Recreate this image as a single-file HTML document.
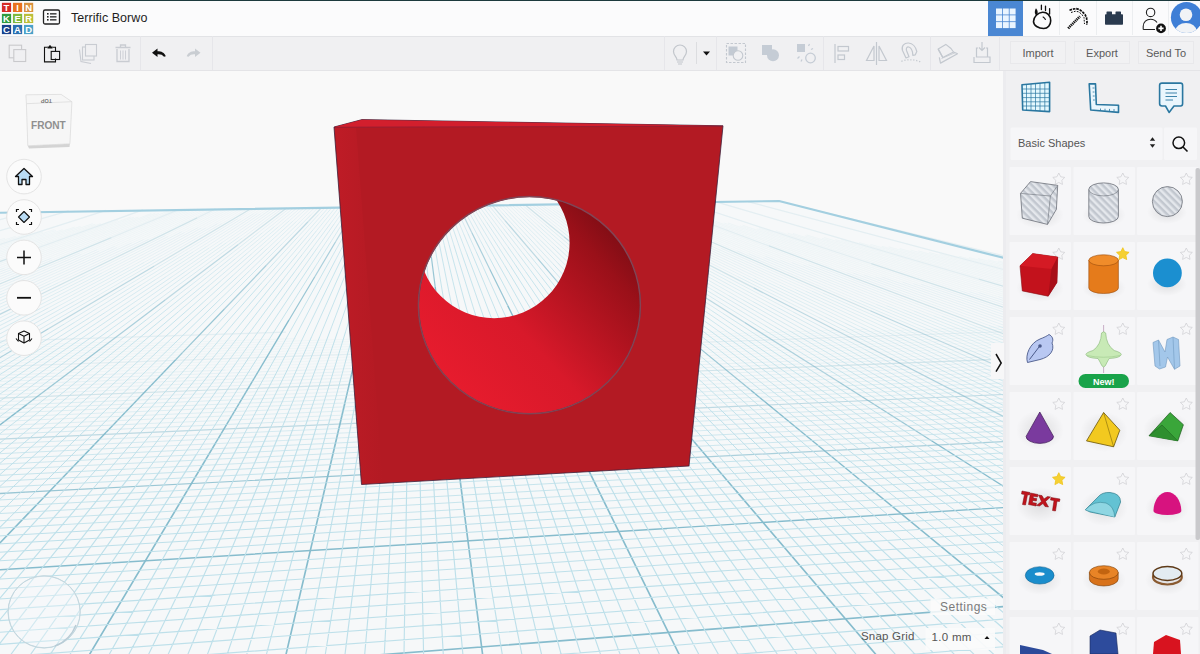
<!DOCTYPE html>
<html><head><meta charset="utf-8">
<style>
*{box-sizing:border-box;margin:0;padding:0}
html,body{width:1200px;height:654px;overflow:hidden;background:#f9f9f9;font-family:"Liberation Sans",sans-serif}
.abs{position:absolute}
#topbar{position:absolute;left:0;top:0;width:1200px;height:37px;background:#fbfbfc;border-top:1px solid #1c3a3d;border-bottom:1px solid #e2e3e6}
#toolbar{position:absolute;left:0;top:37px;width:1003px;height:34px;background:#f0f0f2;border-bottom:1px solid #e4e4e7}
#toolbar2{position:absolute;left:1003px;top:37px;width:197px;height:34px;background:#f0f0f2;border-bottom:1px solid #e4e4e7}
#canvas{position:absolute;left:0;top:0}
#sidebar{position:absolute;left:1003px;top:71px;width:197px;height:583px;background:#f0f0f2;border-left:3px solid #ececef}
.card{position:absolute;width:61px;height:67px;background:#f6f7f8}
.btn{position:absolute;background:#f1f1f3;border:1px solid #e8e8eb;color:#5a5a5a;font-size:11px;text-align:center;line-height:22px}
.navbtn{position:absolute;width:35px;height:35px;border-radius:50%;background:#fafafa;border:1px solid #e2e2e2}
</style></head><body>
<svg id="canvas" width="1200" height="654" viewBox="0 0 1200 654">
<defs>
<clipPath id="cv"><rect x="0" y="70" width="1003" height="584"/></clipPath>
<linearGradient id="wall" x1="0" y1="1" x2="1" y2="0">
<stop offset="0" stop-color="#ee1d2f"/><stop offset="0.4" stop-color="#d8192a"/><stop offset="0.72" stop-color="#9a1019"/><stop offset="1" stop-color="#4e080d"/>
</linearGradient>
<linearGradient id="lstrip" x1="0" y1="0" x2="1" y2="0"><stop offset="0" stop-color="#cc1e2a" stop-opacity="0.45"/><stop offset="1" stop-color="#cc1e2a" stop-opacity="0"/></linearGradient>
</defs>
<g clip-path="url(#cv)">
<path d="M-4220.9 269.8L778.7 201.2L5637.8 1379.6L-2000.0 3000.0Z" fill="#f6f8f9"/>
<path d="M31.1 211.5L-5.0 220.8M68.7 210.9L-5.0 232.1M106.0 210.4L-5.0 245.9M142.8 209.9L24.6 252.6M179.3 209.4L111.4 237.6M215.5 208.9L197.1 217.9M590.2 203.8L608.4 213.1M622.4 203.3L686.7 231.2M654.2 202.9L769.0 245.9M685.8 202.5L871.3 263.6M717.0 202.1L978.9 279.2M748.0 201.6L1008.0 270.8M798.6 206.0L1008.0 256.8M285.9 332.1L-5.0 341.2M1008.0 331.6L-5.0 366.6" stroke="#86bccd" stroke-width="1.20" stroke-opacity="0.167" fill="none"/>
<path d="M24.6 252.6L-5.0 263.3M111.4 237.6L-5.0 286.0M197.1 217.9L40.9 294.2M251.2 208.4L154.0 266.2M286.6 208.0L238.0 244.7M321.7 207.5L307.8 222.0M492.0 205.1L505.1 220.6M525.0 204.7L564.0 236.7M557.8 204.2L642.7 258.0M608.4 213.1L753.7 287.9M686.7 231.2L870.3 310.8M769.0 245.9L1008.0 335.4M871.3 263.6L1008.0 308.7M978.9 279.2L1008.0 287.7M1008.0 359.0L-5.0 398.4" stroke="#86bccd" stroke-width="1.20" stroke-opacity="0.333" fill="none"/>
<path d="M40.9 294.2L-5.0 316.7M154.0 266.2L48.0 329.1M238.0 244.7L165.1 299.9M307.8 222.0L266.1 265.5M356.4 207.0L335.6 241.8M390.8 206.5L386.2 226.2M424.8 206.1L427.4 226.2M458.6 205.6L472.0 232.9M505.1 220.6L538.1 259.1M564.0 236.7L626.3 287.9M642.7 258.0L744.7 322.5M753.7 287.9L889.9 358.0M870.3 310.8L1008.0 370.5M1008.0 394.3L-5.0 439.3" stroke="#86bccd" stroke-width="1.20" stroke-opacity="0.500" fill="none"/>
<path d="M48.0 329.1L-5.0 360.6M165.1 299.9L100.3 349.0M266.1 265.5L224.4 309.0M335.6 241.8L314.8 276.7M386.2 226.2L379.3 255.8M427.4 226.2L431.3 256.5M472.0 232.9L489.8 269.2M538.1 259.1L571.0 297.7M626.3 287.9L688.6 339.1M744.7 322.5L838.1 381.6M889.9 358.0L1008.0 418.8M1008.0 441.3L436.3 470.9" stroke="#86bccd" stroke-width="1.20" stroke-opacity="0.667" fill="none"/>
<path d="M100.3 349.0L27.4 404.1M224.4 309.0L182.7 352.4M314.8 276.7L288.9 320.2M379.3 255.8L370.0 295.2M431.3 256.5L435.2 286.8M489.8 269.2L507.7 305.6M571.0 297.7L610.5 343.9M688.6 339.1L750.9 390.3M838.1 381.6L931.5 440.8M436.3 470.9L25.1 492.2" stroke="#86bccd" stroke-width="1.20" stroke-opacity="0.833" fill="none"/>
<path d="M182.7 352.4L175.7 359.7M25.1 492.2L-5.0 493.8" stroke="#86bccd" stroke-width="1.35" stroke-opacity="0.833" fill="none"/>
<path d="M27.4 404.1L-5.0 428.7M175.7 359.7L106.2 432.2M288.9 320.2L252.5 381.2M370.0 295.2L358.5 344.5M435.2 286.8L443.0 347.3M507.7 305.6L539.0 369.2M610.5 343.9L669.8 413.3M750.9 390.3L852.2 473.5M931.5 440.8L1008.0 489.1M1008.0 507.3L667.0 528.4" stroke="#86bccd" stroke-width="1.35" stroke-opacity="1.000" fill="none"/>
<path d="M106.2 432.2L36.7 504.7M252.5 381.2L216.1 442.2M358.5 344.5L344.7 403.7M443.0 347.3L449.5 397.7M539.0 369.2L570.2 432.8M669.8 413.3L735.7 490.4M852.2 473.5L961.3 563.1M667.0 528.4L-5.0 570.1" stroke="#86bccd" stroke-width="1.50" stroke-opacity="1.000" fill="none"/>
<path d="M36.7 504.7L-5.0 548.1M216.1 442.2L86.2 660.0M344.7 403.7L284.7 660.0M449.5 397.7L483.3 660.0M570.2 432.8L681.9 660.0M735.7 490.4L880.6 660.0M961.3 563.1L1008.0 601.5M1008.0 606.2L313.1 660.0" stroke="#86bccd" stroke-width="1.65" stroke-opacity="1.000" fill="none"/>
<path d="M5.0 238.3L-5.0 241.4M15.7 236.4L-5.0 242.9M24.3 235.1L-5.0 244.3M42.8 232.0L-5.0 247.4M54.2 229.7L-5.0 249.0M56.0 230.5L-5.0 250.7M62.7 229.7L-5.0 252.3M74.7 227.1L-5.0 254.0M80.6 226.4L-5.0 255.8M92.7 223.7L-5.0 257.6M95.4 224.2L-5.0 259.5M100.7 223.7L-5.0 261.4M118.1 220.3L-5.0 265.3M130.8 217.0L-5.0 267.3M134.0 217.2L-5.0 269.5M138.4 217.0L4.6 268.0M151.4 213.5L14.5 266.3M155.3 213.3L23.3 265.0M158.8 213.4L33.5 263.2M172.1 209.5L50.9 258.4M175.7 209.5L52.1 260.1M183.0 209.4L79.6 253.0M186.6 209.3L81.2 254.4M190.2 209.3L97.2 249.7M193.8 209.2L99.1 251.1M197.4 209.2L114.6 246.4M201.0 209.1L116.8 247.6M204.7 209.1L131.7 242.9M208.3 209.0L143.4 239.7M211.9 209.0L148.6 239.4M219.0 208.9L165.3 235.6M222.6 208.8L168.0 236.5M226.2 208.8L181.8 231.7M229.8 208.7L184.6 232.5M233.4 208.7L198.1 227.6M237.0 208.6L201.1 228.2M240.5 208.6L205.5 228.2M244.1 208.5L217.4 223.7M247.7 208.5L221.5 223.7M254.8 208.4L237.5 218.9M258.3 208.3L240.8 219.2M261.9 208.3L253.3 213.8M265.4 208.2L257.0 213.7M269.0 208.2L260.4 213.9M544.7 204.4L553.0 210.2M548.0 204.4L556.4 210.1M551.3 204.3L559.7 209.9M554.5 204.3L571.3 215.2M561.0 204.2L578.2 214.8M564.3 204.1L590.4 219.9M567.6 204.1L593.5 219.4M570.8 204.1L605.8 224.3M574.1 204.0L609.5 224.1M577.3 204.0L612.5 223.5M580.5 203.9L625.1 228.2M583.8 203.9L628.0 227.5M587.0 203.8L640.8 232.0M593.5 203.7L656.5 235.6M596.7 203.7L660.7 235.4M599.9 203.7L672.5 239.0M603.1 203.6L676.7 238.9M606.3 203.6L688.5 242.2M609.6 203.5L693.0 242.1M612.8 203.5L704.7 245.3M616.0 203.4L709.3 245.2M619.2 203.4L721.0 248.2M634.9 207.3L737.5 251.1M638.0 207.1L749.0 253.8M641.4 207.1L763.6 257.7M653.8 210.8L765.7 256.4M657.3 210.7L780.5 260.3M660.3 210.5L791.9 262.6M672.6 214.0L803.1 264.9M676.3 213.9L809.0 265.0M688.6 217.2L820.1 267.2M695.3 216.9L846.9 272.9M708.8 220.4L853.6 273.2M711.5 220.0L864.5 275.1M723.7 222.9L875.3 276.8M728.0 223.0L882.5 277.2M740.1 225.8L902.8 282.2M742.7 225.3L913.2 283.6M756.8 228.7L921.0 284.2M759.2 228.1L931.4 285.6M775.9 230.8L959.7 290.6M787.8 233.2L969.7 291.8M792.9 233.5L978.7 292.6M804.8 235.8L998.3 296.7M806.8 235.0L1008.0 297.6M822.0 238.4L1008.0 295.6M823.9 237.5L1008.0 293.5M835.4 239.6L1008.0 291.6M841.3 240.0L1008.0 289.6M859.1 242.5L1008.0 285.9M870.5 244.4L1008.0 284.0M881.7 246.3L1008.0 282.3M888.6 246.8L1008.0 280.5M899.8 248.6L1008.0 278.8M910.7 250.2L1008.0 277.1M918.2 250.9L1008.0 275.5M929.1 252.5L1008.0 273.9M939.8 254.0L1008.0 272.3M958.6 256.2L1008.0 269.3M968.9 257.6L1008.0 267.8M977.9 258.5L1008.0 266.3M988.2 259.8L1008.0 264.9M998.2 261.0L1008.0 263.5M5.0 343.2L-5.0 343.5M145.4 341.1L-5.0 345.9M295.9 338.6L-5.0 348.3M446.3 336.1L-5.0 350.7M586.8 333.8L-5.0 353.2M727.2 331.5L-5.0 355.8M867.6 329.2L-5.0 358.4M1008.0 326.8L-5.0 361.1M1008.0 329.2L-5.0 363.8M1008.0 334.0L-5.0 369.5M1008.0 336.6L-5.0 372.4M1008.0 339.1L55.2 373.2M1008.0 341.8L225.7 370.1M1008.0 344.5L386.2 367.2M1008.0 347.3L556.7 364.0M1008.0 350.1L717.1 361.0M1008.0 353.0L877.6 357.9" stroke="#bee0ea" stroke-width="0.85" stroke-opacity="0.167" fill="none"/>
<path d="M4.6 268.0L-5.0 271.6M14.5 266.3L-5.0 273.8M23.3 265.0L-5.0 276.1M33.5 263.2L-5.0 278.5M50.9 258.4L-5.0 280.9M52.1 260.1L-5.0 283.4M79.6 253.0L-5.0 288.6M81.2 254.4L-5.0 291.4M97.2 249.7L-5.0 294.2M99.1 251.1L4.5 292.9M114.6 246.4L13.4 291.8M116.8 247.6L23.1 290.4M131.7 242.9L31.5 289.5M143.4 239.7L50.6 283.4M148.6 239.4L58.2 282.8M165.3 235.6L84.6 275.8M168.0 236.5L95.2 273.4M181.8 231.7L101.7 273.1M184.6 232.5L112.4 270.5M198.1 227.6L118.6 270.2M201.1 228.2L129.4 267.4M205.5 228.2L144.1 262.4M217.4 223.7L155.1 259.2M221.5 223.7L160.5 259.1M237.5 218.9L176.8 255.7M240.8 219.2L188.1 251.9M253.3 213.8L193.0 252.0M257.0 213.7L206.3 246.7M260.4 213.9L209.0 248.1M272.5 208.1L222.1 242.6M276.0 208.1L226.4 242.8M279.6 208.1L238.9 237.2M283.1 208.0L241.9 238.3M290.2 207.9L258.2 232.7M293.7 207.9L262.2 233.0M297.2 207.8L273.9 227.0M300.7 207.8L277.8 227.3M304.2 207.7L289.1 220.9M307.7 207.7L292.8 221.2M311.2 207.6L296.5 221.4M314.7 207.6L300.2 221.7M318.2 207.5L311.0 214.7M325.2 207.4L318.3 214.9M495.3 205.1L502.0 212.7M498.6 205.0L505.4 212.4M501.9 205.0L508.9 212.2M505.2 205.0L519.4 219.2M508.5 204.9L523.0 218.9M511.8 204.9L526.6 218.7M515.1 204.8L537.5 225.0M518.4 204.8L541.0 224.5M521.7 204.7L544.9 224.3M528.3 204.6L559.8 229.7M531.6 204.6L571.3 235.4M534.9 204.5L575.0 234.8M538.2 204.5L578.7 234.2M541.4 204.5L590.6 239.6M553.0 210.2L594.4 239.0M556.4 210.1L606.5 244.2M559.7 209.9L610.5 243.6M571.3 215.2L621.7 247.8M578.2 214.8L638.4 252.0M590.4 219.9L651.3 256.8M593.5 219.4L653.9 255.2M605.8 224.3L667.0 259.8M609.5 224.1L671.5 259.3M612.5 223.5L682.8 262.6M625.1 228.2L696.3 267.0M628.0 227.5L707.5 270.0M640.8 232.0L712.4 269.6M656.5 235.6L737.7 276.6M660.7 235.4L742.9 276.2M672.5 239.0L754.1 278.8M676.7 238.9L768.8 282.9M688.5 242.2L779.8 285.2M693.0 242.1L794.9 289.3M704.7 245.3L805.8 291.3M709.3 245.2L812.0 291.2M721.0 248.2L822.8 293.1M737.5 251.1L849.4 298.9M749.0 253.8L860.0 300.5M763.6 257.7L876.4 304.4M765.7 256.4L886.8 305.8M780.5 260.3L903.7 309.8M791.9 262.6L914.0 311.0M803.1 264.9L933.5 315.8M809.0 265.0L941.7 316.1M820.1 267.2L961.0 320.7M846.9 272.9L989.0 325.4M853.6 273.2L998.3 326.0M864.5 275.1L1008.0 326.7M875.3 276.8L1008.0 323.9M882.5 277.2L1008.0 321.2M902.8 282.2L1008.0 318.6M913.2 283.6L1008.0 316.0M921.0 284.2L1008.0 313.5M931.4 285.6L1008.0 311.1M959.7 290.6L1008.0 306.4M969.7 291.8L1008.0 304.1M978.7 292.6L1008.0 301.9M998.3 296.7L1008.0 299.7M55.2 373.2L-5.0 375.4M225.7 370.1L-5.0 378.4M386.2 367.2L-5.0 381.6M556.7 364.0L-5.0 384.8M717.1 361.0L-5.0 388.0M877.6 357.9L-5.0 391.4M1008.0 356.0L-5.0 394.9M1008.0 362.1L-5.0 402.0M1008.0 365.3L185.6 398.1M1008.0 368.6L366.1 394.5M1008.0 372.0L546.6 390.9M1008.0 375.5L727.2 387.1M1008.0 379.0L907.7 383.2" stroke="#bee0ea" stroke-width="0.85" stroke-opacity="0.333" fill="none"/>
<path d="M4.5 292.9L-5.0 297.1M13.4 291.8L-5.0 300.1M23.1 290.4L-5.0 303.2M31.5 289.5L-5.0 306.4M50.6 283.4L-5.0 309.7M58.2 282.8L-5.0 313.1M84.6 275.8L-5.0 320.4M95.2 273.4L13.2 315.0M101.7 273.1L21.7 314.4M112.4 270.5L40.2 308.5M118.6 270.2L48.0 308.1M129.4 267.4L57.7 306.6M144.1 262.4L73.9 301.5M155.1 259.2L84.0 299.7M160.5 259.1L99.5 294.6M176.8 255.7L124.9 287.2M188.1 251.9L135.4 284.6M193.0 252.0L141.4 284.8M206.3 246.7L155.6 279.6M209.0 248.1L166.2 276.6M222.1 242.6L171.6 277.0M226.4 242.8L185.1 271.7M238.9 237.2L190.1 272.2M241.9 238.3L200.8 268.6M258.2 232.7L218.4 263.8M262.2 233.0L230.8 258.2M273.9 227.0L235.2 258.9M277.8 227.3L247.2 253.2M289.1 220.9L251.4 254.0M292.8 221.2L263.0 248.1M296.5 221.4L267.1 248.9M300.2 221.7L278.4 242.8M311.0 214.7L282.3 243.6M318.3 214.9L297.7 237.2M328.7 207.4L302.0 237.5M332.1 207.3L312.7 230.2M335.6 207.3L316.3 231.0M339.1 207.2L320.7 230.9M342.6 207.2L330.6 223.4M346.0 207.1L334.4 223.6M349.5 207.1L338.3 223.9M353.0 207.0L342.1 224.1M359.9 207.0L354.9 215.8M363.3 206.9L358.7 215.8M366.8 206.9L362.3 215.9M370.2 206.8L366.0 216.1M373.6 206.8L369.8 216.0M448.5 205.7L452.1 215.2M451.8 205.7L455.7 215.0M455.2 205.6L459.4 214.9M461.9 205.6L466.6 214.5M465.3 205.5L470.2 214.2M468.6 205.5L478.9 222.6M472.0 205.4L482.9 222.6M475.3 205.4L486.6 222.2M478.6 205.3L490.4 221.9M482.0 205.3L500.1 229.6M485.3 205.2L504.0 229.2M488.6 205.2L507.9 228.7M502.0 212.7L522.3 235.4M505.4 212.4L525.8 234.4M508.9 212.2L536.7 241.1M519.4 219.2L540.8 240.5M523.0 218.9L552.0 246.9M526.6 218.7L556.2 246.2M537.5 225.0L567.4 252.0M541.0 224.5L571.2 250.8M544.9 224.3L583.5 257.0M559.8 229.7L599.1 261.1M571.3 235.4L603.1 260.0M575.0 234.8L615.1 265.0M578.7 234.2L627.3 269.9M590.6 239.6L631.5 268.8M594.4 239.0L644.0 273.6M606.5 244.2L656.7 278.3M610.5 243.6L661.2 277.3M621.7 247.8L672.1 280.4M638.4 252.0L698.6 289.3M651.3 256.8L703.5 288.4M653.9 255.2L714.4 291.0M667.0 259.8L728.2 295.3M671.5 259.3L742.3 299.5M682.8 262.6L753.1 301.7M696.3 267.0L767.6 305.9M707.5 270.0L778.2 307.8M712.4 269.6L793.0 311.9M737.7 276.6L818.8 317.5M742.9 276.2L825.2 317.0M754.1 278.8L844.8 323.0M768.8 282.9L860.8 327.0M779.8 285.2L871.1 328.2M794.9 289.3L887.5 332.1M805.8 291.3L897.7 333.1M812.0 291.2L914.7 337.1M822.8 293.1L933.9 342.0M849.4 298.9L961.4 346.6M860.0 300.5L980.3 351.0M876.4 304.4L989.2 351.1M886.8 305.8L1008.0 355.2M903.7 309.8L1008.0 351.7M914.0 311.0L1008.0 348.3M933.5 315.8L1008.0 344.9M941.7 316.1L1008.0 341.7M961.0 320.7L1008.0 338.5M989.0 325.4L1008.0 332.4M998.3 326.0L1008.0 329.5M185.6 398.1L-5.0 405.7M366.1 394.5L-5.0 409.5M546.6 390.9L-5.0 413.4M727.2 387.1L-5.0 417.5M907.7 383.2L-5.0 421.6M1008.0 382.7L-5.0 425.8M1008.0 386.5L135.4 424.1M1008.0 390.3L336.0 419.7M1008.0 398.4L727.2 411.0M1008.0 402.6L917.7 406.7" stroke="#bee0ea" stroke-width="0.85" stroke-opacity="0.500" fill="none"/>
<path d="M13.2 315.0L-5.0 324.2M21.7 314.4L-5.0 328.1M40.2 308.5L-5.0 332.2M48.0 308.1L-5.0 336.5M57.7 306.6L-5.0 341.0M73.9 301.5L3.8 340.7M84.0 299.7L21.7 335.2M99.5 294.6L38.6 330.1M124.9 287.2L64.3 324.0M135.4 284.6L74.0 322.7M141.4 284.8L89.7 317.6M155.6 279.6L104.9 312.6M166.2 276.6L114.9 310.8M171.6 277.0L129.5 305.6M185.1 271.7L135.5 306.4M190.1 272.2L149.5 301.4M200.8 268.6L159.6 299.0M218.4 263.8L178.5 294.8M230.8 258.2L191.5 289.7M235.2 258.9L204.2 284.5M247.2 253.2L209.0 285.7M251.4 254.0L221.2 280.5M263.0 248.1L233.3 275.1M267.1 248.9L237.7 276.5M278.4 242.8L249.3 271.0M282.3 243.6L260.7 265.3M297.7 237.2L277.0 259.6M302.0 237.5L282.0 260.1M312.7 230.2L286.8 260.7M316.3 231.0L297.1 254.7M320.7 230.9L302.2 254.6M330.6 223.4L312.6 247.6M334.4 223.6L317.0 248.3M338.3 223.9L321.4 249.0M342.1 224.1L331.3 241.2M354.9 215.8L340.0 242.5M358.7 215.8L349.4 233.6M362.3 215.9L353.5 234.0M366.0 216.1L357.7 234.6M369.8 216.0L362.1 234.5M377.1 206.7L366.3 235.0M380.5 206.7L373.9 226.0M383.9 206.6L378.0 225.9M387.4 206.6L382.0 226.3M394.2 206.5L390.3 226.2M397.6 206.4L394.4 226.6M401.0 206.4L398.5 226.5M404.5 206.3L402.7 226.5M407.9 206.3L406.8 226.5M411.3 206.2L410.9 226.4M414.7 206.2L415.1 226.4M418.1 206.2L419.2 226.3M421.5 206.1L423.3 226.3M428.2 206.0L431.5 225.8M431.6 206.0L435.6 225.7M435.0 205.9L439.7 225.7M438.4 205.9L443.7 225.2M441.7 205.8L447.7 225.2M445.1 205.8L451.7 224.7M452.1 215.2L459.3 234.1M455.7 215.0L463.5 233.5M459.4 214.9L467.9 233.5M466.6 214.5L480.7 241.2M470.2 214.2L485.0 240.5M478.9 222.6L489.2 239.8M482.9 222.6L493.8 239.7M486.6 222.2L503.6 247.5M490.4 221.9L507.9 246.7M500.1 229.6L518.3 254.0M504.0 229.2L522.7 253.1M507.9 228.7L527.1 252.2M522.3 235.4L542.5 258.2M525.8 234.4L553.0 263.8M536.7 241.1L557.6 262.8M540.8 240.5L569.2 268.9M552.0 246.9L573.8 267.9M556.2 246.2L585.8 273.8M567.4 252.0L597.3 278.9M571.2 250.8L601.3 277.2M583.5 257.0L614.4 283.2M599.1 261.1L630.5 286.2M603.1 260.0L642.8 290.8M615.1 265.0L655.2 295.2M627.3 269.9L667.8 299.6M631.5 268.8L680.6 303.9M644.0 273.6L685.4 302.4M656.7 278.3L698.5 306.7M661.2 277.3L712.0 310.9M672.1 280.4L722.5 313.1M698.6 289.3L750.1 321.2M703.5 288.4L764.4 325.2M714.4 291.0L774.8 326.8M728.2 295.3L789.4 330.7M742.3 299.5L804.3 334.7M753.1 301.7L823.4 340.8M767.6 305.9L838.8 344.7M778.2 307.8L848.9 345.6M793.0 311.9L864.7 349.4M818.8 317.5L899.9 358.5M825.2 317.0L916.6 362.4M844.8 323.0L926.4 362.7M860.8 327.0L943.6 366.6M871.1 328.2L962.4 371.1M887.5 332.1L980.2 375.0M897.7 333.1L998.8 379.1M914.7 337.1L1008.0 378.9M933.9 342.0L1008.0 374.7M961.4 346.6L1008.0 366.5M980.3 351.0L1008.0 362.7M989.2 351.1L1008.0 358.9M135.4 424.1L-5.0 430.2M336.0 419.7L-5.0 434.6M727.2 411.0L-5.0 444.0M917.7 406.7L-5.0 448.9M1008.0 406.9L145.4 446.9M1008.0 411.4L356.1 442.1M1008.0 416.0L566.7 437.1M1008.0 420.8L777.3 432.0M1008.0 425.7L987.9 426.7" stroke="#bee0ea" stroke-width="0.85" stroke-opacity="0.667" fill="none"/>
<path d="M3.8 340.7L-5.0 345.6M21.7 335.2L-5.0 350.4M38.6 330.1L-5.0 355.4M64.3 324.0L3.7 360.8M74.0 322.7L21.3 355.4M89.7 317.6L38.0 350.4M104.9 312.6L45.7 351.0M114.9 310.8L63.5 345.0M129.5 305.6L79.1 340.1M135.5 306.4L94.2 335.3M149.5 301.4L108.8 330.6M159.6 299.0L118.5 329.3M178.5 294.8L146.6 319.6M191.5 289.7L152.2 321.1M204.2 284.5L165.5 316.4M209.0 285.7L178.4 311.7M221.2 280.5L191.1 306.9M233.3 275.1L203.5 302.1M237.7 276.5L208.3 304.0M249.3 271.0L220.2 299.1M260.7 265.3L232.0 294.1M277.0 259.6L249.5 289.4M282.0 260.1L261.9 282.7M286.8 260.7L267.3 283.6M297.1 254.7L277.8 278.3M302.2 254.6L283.8 278.3M312.6 247.6L294.6 271.9M317.0 248.3L299.6 273.0M321.4 249.0L310.2 265.8M331.3 241.2L315.1 266.9M340.0 242.5L330.0 260.3M349.4 233.6L335.4 260.2M353.5 234.0L344.7 252.2M357.7 234.6L349.3 253.1M362.1 234.5L354.4 253.0M366.3 235.0L359.2 253.9M373.9 226.0L367.3 245.2M378.0 225.9L372.1 245.2M382.0 226.3L376.7 246.0M390.3 226.2L386.4 245.9M394.4 226.6L391.1 246.8M398.5 226.5L396.0 246.7M402.7 226.5L400.9 246.7M406.8 226.5L406.3 236.5M410.9 226.4L410.8 236.5M415.1 226.4L415.3 236.5M419.2 226.3L419.8 236.4M423.3 226.3L425.2 246.5M431.5 225.8L434.7 245.5M435.6 225.7L439.6 245.4M439.7 225.7L444.4 245.4M443.7 225.2L449.0 244.5M447.7 225.2L453.7 244.5M451.7 224.7L461.5 253.1M459.3 234.1L466.6 253.1M463.5 233.5L471.3 252.0M467.9 233.5L476.3 252.0M480.7 241.2L490.1 259.0M485.0 240.5L494.8 257.9M489.2 239.8L504.7 265.5M493.8 239.7L510.2 265.5M503.6 247.5L515.0 264.3M507.9 246.7L525.5 271.5M518.3 254.0L530.4 270.2M522.7 253.1L541.4 277.0M527.1 252.2L546.4 275.8M542.5 258.2L569.6 288.5M553.0 263.8L573.4 285.8M557.6 262.8L585.4 291.7M569.2 268.9L597.6 297.4M573.8 267.9L602.8 295.9M585.8 273.8L615.3 301.4M597.3 278.9L627.2 305.9M601.3 277.2L638.9 310.1M614.4 283.2L645.2 309.3M630.5 286.2L669.9 317.6M642.8 290.8L682.5 321.6M655.2 295.2L695.3 325.5M667.8 299.6L708.3 329.4M680.6 303.9L721.5 333.2M685.4 302.4L735.0 337.0M698.5 306.7L748.7 340.8M712.0 310.9L762.7 344.6M722.5 313.1L781.3 351.1M750.1 321.2L810.3 358.4M764.4 325.2L825.3 362.1M774.8 326.8L835.3 362.6M789.4 330.7L859.4 371.3M804.3 334.7L875.2 374.9M823.4 340.8L884.9 375.1M838.8 344.7L901.1 378.7M848.9 345.6L919.6 383.4M864.7 349.4L936.3 387.0M899.9 358.5L981.0 399.5M916.6 362.4L998.9 403.2M926.4 362.7L1008.0 402.5M943.6 366.6L1008.0 397.5M962.4 371.1L1008.0 392.6M980.2 375.0L1008.0 387.9M998.8 379.1L1008.0 383.3M145.4 446.9L-5.0 453.9M356.1 442.1L-5.0 459.1M566.7 437.1L-5.0 464.4M777.3 432.0L-5.0 469.9M987.9 426.7L125.4 469.2M1008.0 430.7L356.1 463.4M1008.0 435.9L586.8 457.4" stroke="#bee0ea" stroke-width="0.85" stroke-opacity="0.833" fill="none"/>
<path d="M3.7 360.8L-5.0 366.1M21.3 355.4L-5.0 371.8M38.0 350.4L-5.0 377.7M45.7 351.0L-5.0 384.0M63.5 345.0L-5.0 390.5M79.1 340.1L-5.0 397.4M94.2 335.3L-5.0 404.6M108.8 330.6L-5.0 412.2M118.5 329.3L-5.0 420.2M146.6 319.6L-5.0 437.6M152.2 321.1L2.9 440.7M165.5 316.4L18.2 437.8M178.4 311.7L33.2 435.1M191.1 306.9L55.3 426.0M203.5 302.1L69.5 423.5M208.3 304.0L90.6 414.2M220.2 299.1L104.0 411.9M232.0 294.1L124.3 402.4M249.5 289.4L153.2 393.8M261.9 282.7L168.5 388.0M267.3 283.6L183.0 382.7M277.8 278.3L194.2 381.0M283.8 278.3L210.1 373.2M294.6 271.9L222.7 368.9M299.6 273.0L235.7 363.6M310.2 265.8L248.5 358.1M315.1 266.9L255.6 360.9M330.0 260.3L280.2 349.1M335.4 260.2L288.8 349.1M344.7 252.2L300.5 342.8M349.3 253.1L311.8 336.3M354.4 253.0L319.9 336.3M359.2 253.9L330.6 329.5M367.3 245.2L337.5 332.1M372.1 245.2L345.5 332.0M376.7 246.0L355.4 324.9M386.4 245.9L370.8 324.8M391.1 246.8L379.7 317.3M396.0 246.7L387.2 317.3M400.9 246.7L394.6 317.2M406.3 236.5L402.0 317.2M410.8 236.5L409.5 317.2M415.3 236.5L416.9 317.1M419.8 236.4L424.3 317.1M425.2 246.5L431.7 317.1M434.7 245.5L447.8 324.4M439.6 245.4L455.5 324.4M444.4 245.4L463.1 324.4M449.0 244.5L472.8 331.5M453.7 244.5L480.7 331.4M461.5 253.1L487.7 328.8M466.6 253.1L499.2 338.2M471.3 252.0L506.2 335.5M476.3 252.0L514.3 335.5M490.1 259.0L537.2 348.1M494.8 257.9L549.1 354.1M504.7 265.5L556.1 351.3M510.2 265.5L570.2 359.8M515.0 264.3L582.9 365.3M525.5 271.5L590.0 362.4M530.4 270.2L603.0 367.7M541.4 277.0L616.3 372.8M546.4 275.8L629.8 377.7M569.6 288.5L657.3 387.1M573.4 285.8L675.4 395.8M585.4 291.7L689.7 400.0M597.6 297.4L704.2 404.0M602.8 295.9L718.8 408.0M615.3 301.4L741.0 418.6M627.2 305.9L754.1 420.4M638.9 310.1L774.5 428.5M645.2 309.3L791.9 433.5M669.9 317.6L827.1 443.0M682.5 321.6L849.2 450.8M695.3 325.5L871.7 458.5M708.3 329.4L886.5 460.2M721.5 333.2L909.8 467.8M735.0 337.0L933.5 475.4M748.7 340.8L957.8 482.9M762.7 344.6L974.2 484.8M781.3 351.1L999.6 492.5M810.3 358.4L1008.0 480.7M825.3 362.1L1008.0 472.6M835.3 362.6L1008.0 464.8M859.4 371.3L1008.0 457.4M875.2 374.9L1008.0 450.3M884.9 375.1L1008.0 443.5M901.1 378.7L1008.0 436.9M919.6 383.4L1008.0 430.7M936.3 387.0L1008.0 424.6M981.0 399.5L1008.0 413.1M998.9 403.2L1008.0 407.7M125.4 469.2L-5.0 475.6M356.1 463.4L-5.0 481.4M586.8 457.4L-5.0 487.5M1008.0 446.9L-5.0 500.2M1008.0 452.7L-5.0 506.9M1008.0 458.7L-5.0 513.8M1008.0 464.9L-5.0 521.0M1008.0 471.3L65.2 524.5M1008.0 478.0L326.0 517.1M1008.0 484.9L586.8 509.5M1008.0 492.0L847.5 501.6" stroke="#bee0ea" stroke-width="0.85" stroke-opacity="1.000" fill="none"/>
<path d="M2.9 440.7L-5.0 447.0M18.2 437.8L-5.0 457.0M33.2 435.1L-5.0 467.6M55.3 426.0L-5.0 478.9M69.5 423.5L-5.0 490.9M90.6 414.2L-5.0 503.8M104.0 411.9L-5.0 517.5M124.3 402.4L9.4 517.8M153.2 393.8L50.0 505.6M168.5 388.0L68.4 501.0M183.0 382.7L92.3 489.5M194.2 381.0L110.7 483.6M210.1 373.2L130.2 475.9M222.7 368.9L144.7 474.0M235.7 363.6L160.2 470.6M248.5 358.1L181.2 458.7M255.6 360.9L196.1 454.9M280.2 349.1L225.5 446.8M288.8 349.1L242.3 437.9M300.5 342.8L256.3 433.4M311.8 336.3L270.0 428.8M319.9 336.3L281.5 428.8M330.6 329.5L294.8 423.9M337.5 332.1L307.8 418.9M345.5 332.0L318.9 418.8M355.4 324.9L331.4 413.6M370.8 324.8L355.2 403.7M379.7 317.3L365.1 408.0M387.2 317.3L375.8 408.0M394.6 317.2L386.5 408.0M402.0 317.2L397.8 397.9M409.5 317.2L408.1 397.8M416.9 317.1L418.5 397.8M424.3 317.1L428.8 397.8M431.7 317.1L440.1 407.8M447.8 324.4L460.8 403.4M455.5 324.4L471.4 403.4M463.1 324.4L484.2 413.2M472.8 331.5L493.9 408.8M480.7 331.4L507.7 418.4M487.7 328.8L520.5 423.4M499.2 338.2L531.8 423.4M506.2 335.5L545.1 428.2M514.3 335.5L556.5 428.2M537.2 348.1L584.2 437.2M549.1 354.1L598.4 441.5M556.1 351.3L617.9 454.2M570.2 359.8L630.3 454.1M582.9 365.3L645.3 457.9M590.0 362.4L666.2 469.9M603.0 367.7L681.7 473.2M616.3 372.8L697.4 476.5M629.8 377.7L719.6 487.5M657.3 387.1L758.6 500.8M675.4 395.8L777.5 505.9M689.7 400.0L801.0 515.6M704.2 404.0L825.0 524.9M718.8 408.0L842.1 527.0M741.0 418.6L866.7 535.9M754.1 420.4L888.5 541.7M774.5 428.5L917.6 553.5M791.9 433.5L938.5 557.7M827.1 443.0L992.3 574.7M849.2 450.8L1008.0 573.9M871.7 458.5L1008.0 561.3M886.5 460.2L1008.0 549.3M909.8 467.8L1008.0 538.0M933.5 475.4L1008.0 527.2M957.8 482.9L1008.0 517.0M974.2 484.8L1008.0 507.3M999.6 492.5L1008.0 498.0M65.2 524.5L-5.0 528.4M326.0 517.1L-5.0 536.2M586.8 509.5L-5.0 544.2M847.5 501.6L-5.0 552.5M1008.0 499.5L-5.0 561.1M1008.0 515.3L-5.0 579.4M1008.0 523.7L-5.0 589.2M1008.0 532.5L-5.0 599.3M1008.0 541.6L215.7 595.1M1008.0 551.2L526.6 584.4M1008.0 561.2L827.5 573.9" stroke="#bee0ea" stroke-width="1.00" stroke-opacity="1.000" fill="none"/>
<path d="M9.4 517.8L-5.0 532.3M50.0 505.6L-5.0 565.3M68.4 501.0L-5.0 583.8M92.3 489.5L-5.0 603.9M110.7 483.6L-5.0 625.8M130.2 475.9L-5.0 649.7M144.7 474.0L6.8 660.0M160.2 470.6L26.7 660.0M181.2 458.7L46.5 660.0M196.1 454.9L66.4 660.0M225.5 446.8L106.1 660.0M242.3 437.9L125.9 660.0M256.3 433.4L145.8 660.0M270.0 428.8L165.6 660.0M281.5 428.8L185.5 660.0M294.8 423.9L205.3 660.0M307.8 418.9L225.2 660.0M318.9 418.8L245.0 660.0M331.4 413.6L264.9 660.0M355.2 403.7L304.6 660.0M365.1 408.0L324.4 660.0M375.8 408.0L344.3 660.0M386.5 408.0L364.2 660.0M397.8 397.9L384.0 660.0M408.1 397.8L403.9 660.0M418.5 397.8L423.7 660.0M428.8 397.8L443.6 660.0M440.1 407.8L463.4 660.0M460.8 403.4L503.2 660.0M471.4 403.4L523.0 660.0M484.2 413.2L542.9 660.0M493.9 408.8L562.7 660.0M507.7 418.4L582.6 660.0M520.5 423.4L602.5 660.0M531.8 423.4L622.3 660.0M545.1 428.2L642.2 660.0M556.5 428.2L662.0 660.0M584.2 437.2L701.8 660.0M598.4 441.5L721.6 660.0M617.9 454.2L741.5 660.0M630.3 454.1L761.4 660.0M645.3 457.9L781.2 660.0M666.2 469.9L801.1 660.0M681.7 473.2L821.0 660.0M697.4 476.5L840.8 660.0M719.6 487.5L860.7 660.0M758.6 500.8L900.4 660.0M777.5 505.9L920.3 660.0M801.0 515.6L940.2 660.0M825.0 524.9L960.0 660.0M842.1 527.0L979.9 660.0M866.7 535.9L999.8 660.0M888.5 541.7L1008.0 649.5M917.6 553.5L1008.0 632.5M938.5 557.7L1008.0 616.5M992.3 574.7L1008.0 587.3M215.7 595.1L-5.0 609.9M526.6 584.4L-5.0 621.0M827.5 573.9L-5.0 632.6M1008.0 571.7L-5.0 644.7M1008.0 582.6L-5.0 657.4M1008.0 594.1L136.2 660.0M1008.0 618.8L490.1 660.0M1008.0 632.2L667.1 660.0M1008.0 646.3L844.2 660.0" stroke="#bee0ea" stroke-width="1.15" stroke-opacity="1.000" fill="none"/>
<path d="M-10 212.9L779 201L1010 259.5" fill="none" stroke="#a3cfe0" stroke-width="2.2" stroke-linejoin="round"/>
<!-- box -->
<path d="M418.4 305.2A111.0 108.6 0 1 0 640.4 305.2A111.0 108.6 0 1 0 418.4 305.2Z M418.6 242.7A75.5 75.5 0 1 0 569.6 242.7A75.5 75.5 0 1 0 418.6 242.7Z" fill="url(#wall)" fill-rule="evenodd"/>
<path d="M334 127L362 119.6L723 125.8L689 466L361.5 484.5Z M418.4 305.2A111.0 108.6 0 1 0 640.4 305.2A111.0 108.6 0 1 0 418.4 305.2Z" fill="#b31a23" fill-rule="evenodd" stroke="#3c1f3a" stroke-width="0.8"/>
<path d="M334.5 127L362 119.8L723 125.8Z" fill="#d21f2d"/><path d="M335 127.2L723 126.2" stroke="#8c2038" stroke-width="0.7"/><path d="M335 128L356 127.8L383 483.5L362 484.3Z" fill="url(#lstrip)"/>
<ellipse cx="529.4" cy="305.2" rx="111" ry="108.6" fill="none" stroke="#844454" stroke-width="1.5"/>
<circle cx="44" cy="612" r="36" fill="none" stroke="#c8dbe2" stroke-width="1"/>
</g>
</svg>


<svg width="1003" height="654" style="position:absolute;left:0;top:0">
<!-- view cube -->
<path d="M27.8 145.8L69.9 143.8L69.5 147L29 148.5Z" fill="#d4d4d4"/>
<path d="M25.9 94.8L61.1 94.4L71.9 101.7L69.9 143.8L27.8 145.8L26.4 103.7Z" fill="#f6f6f6" stroke="#d9d9d9" stroke-width="0.7" stroke-linejoin="round"/>
<path d="M26.4 103.7L71.9 101.7" stroke="#dcdcdc" stroke-width="0.8"/>
<text x="46.5" y="96" font-family="Liberation Sans" font-size="5.5" font-weight="bold" fill="#777" text-anchor="middle" transform="rotate(180 46.5 97.5)">TOP</text>
<text x="0" y="0" font-family="Liberation Sans" font-size="11" font-weight="bold" fill="#8f8f8f" text-anchor="middle" transform="translate(48.4 129.1) scale(0.92 1)">FRONT</text>
<!-- nav buttons -->
<g fill="#fbfbfb" stroke="#e4e4e4" stroke-width="1">
<circle cx="24" cy="176.6" r="17.3"/><circle cx="24" cy="217" r="17.3"/><circle cx="24" cy="257.4" r="17.3"/><circle cx="24" cy="297.8" r="17.3"/><circle cx="24" cy="338.2" r="17.3"/>
</g>
<path d="M15.5 176.5L24 168.5L32.5 176.5H29.5V184.5H26V179.5H22V184.5H18.5V176.5Z" fill="#b9dcf5" stroke="#111" stroke-width="1.3" stroke-linejoin="round"/>
<path d="M24 211.5L29.5 217L24 222.5L18.5 217Z" fill="#b9dcf5" stroke="#111" stroke-width="1.1" stroke-linejoin="round"/>
<path d="M16.5 212V209.5H19M29 209.5H31.5V212M31.5 222V224.5H29M19 224.5H16.5V222" fill="none" stroke="#111" stroke-width="1.2"/>
<path d="M24 250.5V264.5M17 257.5H31" stroke="#111" stroke-width="1.5"/>
<path d="M17 297.8H31" stroke="#111" stroke-width="1.8"/>
<g fill="none" stroke="#111" stroke-width="1.1" stroke-linejoin="round">
<path d="M18.5 333.5L24 331L29.5 333.5V340L24 343L18.5 340Z" fill="#fbfbfb"/><path d="M18.5 333.5L24 336.2L29.5 333.5M24 336.2V343"/>
<path d="M16 338.5L18.5 341.5M32 338.5L29.5 341.5"/>
</g>
<!-- bottom-left circle -->
<circle cx="44.2" cy="611.8" r="36" fill="#f7fafb" fill-opacity="0.35" stroke="#c3d7df" stroke-width="1"/><path d="M76 625A36 36 0 0 1 55 646" fill="none" stroke="#b8ccd6" stroke-width="1.5"/>
<!-- settings / snap -->
<rect x="930.5" y="598.5" width="64.5" height="16.5" fill="#fbfbfb" fill-opacity="0.85"/>
<text x="940" y="610.5" font-family="Liberation Sans" font-size="12" letter-spacing="0.5" fill="#7a7a7a">Settings</text>
<text x="861" y="639.6" font-family="Liberation Sans" font-size="11.5" letter-spacing="0.2" fill="#555">Snap Grid</text>
<rect x="925.5" y="628" width="69.5" height="22" fill="#fbfbfb" fill-opacity="0.9"/>
<text x="931.5" y="640.5" font-family="Liberation Sans" font-size="11.5" letter-spacing="0.3" fill="#555">1.0 mm</text>
<path d="M984.5 639L987 636L989.5 639Z" fill="#111"/>
</svg>

<div id="topbar">
<svg width="1200" height="36" style="position:absolute;left:0;top:-1px">
<g font-family="Liberation Sans" font-weight="bold" font-size="9.5" fill="#fff" text-anchor="middle"><rect x="1.90" y="2.80" width="9.2" height="9.2" fill="#d52b25"/><text x="6.50" y="10.90">T</text><rect x="12.95" y="2.80" width="9.2" height="9.2" fill="#e8721f"/><text x="17.55" y="10.90">I</text><rect x="24.00" y="2.80" width="9.2" height="9.2" fill="#d9913f"/><text x="28.60" y="10.90">N</text><rect x="1.90" y="13.85" width="9.2" height="9.2" fill="#2f9b3f"/><text x="6.50" y="21.95">K</text><rect x="12.95" y="13.85" width="9.2" height="9.2" fill="#80b93b"/><text x="17.55" y="21.95">E</text><rect x="24.00" y="13.85" width="9.2" height="9.2" fill="#bbbe39"/><text x="28.60" y="21.95">R</text><rect x="1.90" y="24.90" width="9.2" height="9.2" fill="#18418b"/><text x="6.50" y="33.00">C</text><rect x="12.95" y="24.90" width="9.2" height="9.2" fill="#2b70b1"/><text x="17.55" y="33.00">A</text><rect x="24.00" y="24.90" width="9.2" height="9.2" fill="#4ba1c9"/><text x="28.60" y="33.00">D</text></g>
<rect x="43.5" y="10" width="16" height="14" rx="1.5" fill="none" stroke="#222" stroke-width="1.3"/>
<g fill="#222"><rect x="47" y="13" width="1.6" height="1.6"/><rect x="47" y="16" width="1.6" height="1.6"/><rect x="47" y="19" width="1.6" height="1.6"/>
<rect x="50" y="13.2" width="6.5" height="1.3"/><rect x="50" y="16.2" width="6.5" height="1.3"/><rect x="50" y="19.2" width="6.5" height="1.3"/></g>
<text x="71" y="21.6" font-family="Liberation Sans" font-size="12.5" letter-spacing="0.05" fill="#1e1e1e">Terrific Borwo</text>
<rect x="988" y="1" width="35" height="35" fill="#4a87d3"/>
<g fill="#eaf5ff"><rect x="996" y="8.5" width="6" height="6"/><rect x="1002.8" y="8.5" width="6" height="6"/><rect x="1009.6" y="8.5" width="6" height="6"/>
<rect x="996" y="15.3" width="6" height="6"/><rect x="1002.8" y="15.3" width="6" height="6"/><rect x="1009.6" y="15.3" width="6" height="6"/>
<rect x="996" y="22.1" width="6" height="6"/><rect x="1002.8" y="22.1" width="6" height="6"/><rect x="1009.6" y="22.1" width="6" height="6"/></g>
<g stroke="#eceef0" stroke-width="1"><line x1="1059.5" y1="1" x2="1059.5" y2="35"/><line x1="1096.5" y1="1" x2="1096.5" y2="35"/><line x1="1132.5" y1="1" x2="1132.5" y2="35"/><line x1="1168.5" y1="1" x2="1168.5" y2="35"/></g>
<!-- falling rock -->
<g fill="none" stroke="#111" stroke-linecap="round">
<path d="M1042.5 12.2C1038 12.5 1033.5 17 1033.5 21.5C1033.5 25.5 1038.5 28.5 1043.7 28.5C1047.8 28.5 1050.7 25 1050.7 20.7C1050.7 15.5 1047 12 1042.5 12.2Z" stroke-width="1.6"/>
<path d="M1043.1 16.9C1044.2 17.5 1045 18.5 1045.4 19.5" stroke-width="1.1"/>
<path d="M1041.4 5.2V9.6M1045.5 6.1V10.5M1049.6 8.7V14" stroke-width="1.3"/>
</g>
<path d="M1036 8.3C1038 10.5 1038.3 13.5 1036.8 15.6C1035 15 1033.8 12 1036 8.3Z" fill="#111"/>
<!-- pickaxe -->
<g fill="none" stroke="#111" stroke-linecap="butt">
<path d="M1069.5 10.2L1072.5 9.2L1076.3 8.6L1079.5 9.6L1082.5 11.8L1085 14.5L1086.5 17.5L1087 21.5L1086.8 25" stroke-width="1.7" stroke-dasharray="2.6 0.9"/>
<path d="M1071 12.5L1075.5 11.2L1078.5 11.8L1081.5 14L1084 17.5L1084.5 24" stroke-width="1" stroke-dasharray="1.8 1.2"/>
<path d="M1068.2 28.3L1080 16.3" stroke-width="2.6" stroke-dasharray="1.3 0.7"/>
</g>
<!-- brick -->
<g fill="#2b3b4f"><rect x="1105" y="14.2" width="18" height="10.6" rx="0.8"/><rect x="1106.5" y="11.5" width="5.5" height="3.5" rx="0.6"/><rect x="1115.5" y="11.5" width="5.5" height="3.5" rx="0.6"/></g>
<!-- person add -->
<g fill="none" stroke="#222" stroke-width="1.1"><circle cx="1150.6" cy="12.4" r="4.2"/><path d="M1143.2 29.5L1143.2 26.5C1143.2 22 1146.5 19.2 1150.6 19.2C1153.5 19.2 1155.8 20.6 1157 22.5M1143.2 29.5L1155 29.5"/></g>
<circle cx="1161" cy="28.4" r="4.9" fill="#111"/>
<path d="M1161 25.8V31M1158.4 28.4H1163.6" stroke="#fff" stroke-width="1.6"/>
<!-- avatar -->
<circle cx="1186.5" cy="17.5" r="15.6" fill="#3f7fd6"/>
<clipPath id="avc"><circle cx="1186.5" cy="17.5" r="15.6"/></clipPath>
<g clip-path="url(#avc)" fill="#f1f3f6"><circle cx="1186" cy="14.8" r="6.3"/><ellipse cx="1186" cy="31" rx="10.5" ry="8"/></g>
</svg>
</div>
<div id="toolbar">
<svg width="1003" height="34" style="position:absolute;left:0;top:-1px">
<g stroke="#e6e6ea" stroke-width="1"><line x1="140.5" y1="0" x2="140.5" y2="34"/><line x1="212.5" y1="0" x2="212.5" y2="34"/>
<line x1="664.5" y1="0" x2="664.5" y2="34"/><line x1="716.5" y1="0" x2="716.5" y2="34"/><line x1="823.5" y1="0" x2="823.5" y2="34"/><line x1="930.5" y1="0" x2="930.5" y2="34"/><line x1="999.5" y1="0" x2="999.5" y2="34"/></g>
<!-- copy -->
<g fill="none" stroke="#c9c9cc" stroke-width="1.1"><rect x="9.2" y="9.2" width="12.4" height="12.6"/><rect x="13.8" y="13.6" width="11.9" height="11.9" fill="#f0f0f2"/></g>
<!-- paste -->
<g fill="none" stroke="#111" stroke-width="1.1"><path d="M47.5 11.2H44.5V25.9H55.5V22.5M55.5 15.4V11.2H52.5"/><rect x="51.2" y="15.4" width="8.4" height="8.1"/></g>
<path d="M47.5 12.5V10.5H49C49 8.8 51 8.8 51 10.5H52.5V12.5Z" fill="#111"/>
<!-- duplicate -->
<g fill="#f0f0f2" stroke="#c9ccd2" stroke-width="1.1"><path d="M79.5 13.5L81 25.5L91 27.5"/><rect x="82.5" y="11" width="11.5" height="13"/><rect x="85.5" y="8.5" width="11" height="11.5"/></g>
<!-- trash -->
<g fill="none" stroke="#c9ccd2" stroke-width="1.3"><path d="M115.5 11.5H130.5M120.5 11.5V9H125.5V11.5"/><path d="M117 13V25.5H129V13"/><path d="M120.5 14.5V23.5M123 14.5V23.5M125.5 14.5V23.5" stroke-width="0.9"/></g>
<!-- undo -->
<path d="M152 16.8L157.5 12.5V15.2C161.5 15.2 164.5 16.5 165.8 20.3L164 20.8C162.5 18.6 160.5 18 157.5 18.2V21Z" fill="#111"/>
<!-- redo -->
<path d="M200.5 16.8L195 12.5V15.2C191 15.2 188 16.5 186.7 20.3L188.5 20.8C190 18.6 192 18 195 18.2V21Z" fill="#c9cdd2"/>
<!-- bulb -->
<g fill="none" stroke="#c2c6cc" stroke-width="1.2"><path d="M677 24C677 21 673.5 19.5 673.5 15.5C673.5 11.7 676.5 9 680 9C683.5 9 686.5 11.7 686.5 15.5C686.5 19.5 683 21 683 24Z"/><path d="M677 26H683M678 28H682"/></g>
<line x1="696.5" y1="6" x2="696.5" y2="28" stroke="#dcdde0"/>
<path d="M703 15.5H710L706.5 19.5Z" fill="#111"/>
<!-- group -->
<g stroke="#c3c8cf" stroke-width="1.1" fill="none"><rect x="726.5" y="7.5" width="19" height="19" stroke-dasharray="2.5 1.5"/></g>
<rect x="728.5" y="10.5" width="9" height="9" fill="#c3cad3"/><circle cx="738" cy="19.5" r="4.8" fill="#f0f0f2" stroke="#c3c8cf" stroke-width="1.1"/>
<!-- union -->
<rect x="762" y="9" width="10" height="10" fill="#c5ccd5"/><circle cx="773" cy="19.2" r="6" fill="#c5ccd5"/>
<!-- ungroup -->
<rect x="797" y="8" width="8" height="8" fill="#c5ccd5"/><circle cx="810.5" cy="22" r="4.8" fill="none" stroke="#c5ccd5" stroke-width="1.3"/>
<g stroke="#c5ccd5" stroke-width="1.2"><line x1="808.5" y1="10" x2="809.5" y2="8"/><line x1="811" y1="13.5" x2="813" y2="12.5"/><line x1="797.5" y1="22.5" x2="799.5" y2="20.5"/><line x1="801" y1="25.5" x2="802" y2="23.5"/></g>
<!-- align -->
<g stroke="#c3c8cf" stroke-width="1.2" fill="none"><line x1="835" y1="8" x2="835" y2="27"/><rect x="838" y="10.5" width="10.5" height="4.5"/><rect x="838" y="19" width="6.5" height="4.5"/></g>
<!-- mirror -->
<g stroke="#c3c8cf" stroke-width="1.2" fill="none"><line x1="876.5" y1="6" x2="876.5" y2="29"/><path d="M874 10L866.5 24.5H874Z"/><path d="M879 10L886.5 24.5H879Z"/></g>
<!-- cruise/magnet -->
<g stroke="#c3c8cf" stroke-width="1.2" fill="none" stroke-linejoin="round">
<path d="M906 22L902.5 14.5C901 9.5 904.5 6.8 908.5 7C912.5 7.3 915.8 11 916.8 15.5L915.3 18.8L912.8 19.3L912.5 16C911.8 13.5 910.3 11.2 908.6 11C907 10.8 905.8 12 906.5 14.5L909 20.8Z"/>
</g>
<path d="M901.4 25.3Q911 22 920.7 25.9" stroke="#c3c8cf" stroke-width="1.3" stroke-dasharray="1.2 1.8" fill="none"/>
<!-- workplane -->
<g stroke="#c3c8cf" stroke-width="1.2" fill="none" stroke-linejoin="round">
<path d="M938.2 13.1L945.8 8.4L951 12.5L953.5 16L942.8 21.5Z"/>
<path d="M938.2 13.1L942.8 21.5"/>
<path d="M939.3 21.3L940.5 27.1L957.5 17.8L953.5 16"/>
<path d="M941.5 22.5L955 16.8" stroke-width="0.8"/>
</g>
<!-- drop -->
<g stroke="#c3c8cf" stroke-width="1.2" fill="none"><path d="M982 6V14M979 11.5L982 14.5L985 11.5"/><path d="M978 12H976.5V21H987.5V12H986M974 21V26.5H990V21H987.5"/></g>
</svg>
</div>
<div id="toolbar2">
<div class="btn" style="left:7px;top:4px;width:56px;height:23px">Import</div>
<div class="btn" style="left:71px;top:4px;width:56px;height:23px">Export</div>
<div class="btn" style="left:135px;top:4px;width:56px;height:23px">Send To</div>
</div>


<div id="sidebar"></div>
<svg width="1200" height="654" style="position:absolute;left:0;top:0">
<defs>
<pattern id="stripe" width="5" height="5" patternUnits="userSpaceOnUse" patternTransform="rotate(-45)"><rect width="5" height="5" fill="#c2c7cf"/><rect width="2.5" height="5" fill="#e4e7ec"/></pattern>
<radialGradient id="sh" cx="0.5" cy="0.5" r="0.5"><stop offset="0" stop-color="#000" stop-opacity="0.10"/><stop offset="1" stop-color="#000" stop-opacity="0"/></radialGradient>
</defs>
<!-- sidebar icons -->
<g fill="none" stroke="#2a77a0" stroke-linejoin="round">
<path d="M1022 84.7L1049.6 82.3V111.6L1022.7 110Z" stroke-width="1.6" fill="#e4f8fe"/>
<path d="M1026.5 84.3V110.3M1031 83.9V110.6M1035.5 83.5V110.9M1040 83.1V111.1M1044.8 82.7V111.3M1022.2 89H1049.6M1022.3 93.3H1049.6M1022.4 97.6H1049.6M1022.5 101.8H1049.6M1022.6 106H1049.6" stroke-width="0.7"/>
<path d="M1089.2 83.9H1095.5L1096.3 104.5L1118.5 105.2V112.4L1090.7 110Z" stroke-width="1.6" fill="#eaf6fd"/>
<path d="M1092.5 88H1094.5M1092.7 92H1094.5M1092.8 96H1094.7M1093 100H1094.8M1100.5 108.5V110.5M1105 108.7V110.7M1109.5 108.9V111M1114 109V111.2" stroke-width="0.8"/>
<path d="M1162 83.1H1180.5Q1182.6 83.1 1182.6 85.2V103.8Q1182.6 106 1180.5 106H1174L1169.1 112.4L1165.5 106H1162Q1159.6 106 1159.6 103.8V85.2Q1159.6 83.1 1162 83.1Z" stroke-width="1.6" fill="#eaf6fd"/>
<path d="M1165.5 89.5H1177M1165.5 93H1177M1165.5 96.5H1177M1165.5 100H1173" stroke-width="0.9"/>
</g>
<!-- dropdown -->
<rect x="1010.5" y="127.5" width="152" height="32.5" rx="1.5" fill="#f6f6f8"/>
<text x="1018" y="147" font-family="Liberation Sans" font-size="11" fill="#555">Basic Shapes</text>
<path d="M1149.8 140.8L1152.5 137.2L1155.2 140.8ZM1149.8 144.2L1152.5 147.8L1155.2 144.2Z" fill="#222"/>
<rect x="1164" y="127.5" width="33" height="32.5" rx="1.5" fill="#f6f6f8"/>
<circle cx="1178.8" cy="142.8" r="5.8" fill="none" stroke="#111" stroke-width="1.5"/>
<line x1="1183" y1="147" x2="1187.5" y2="151.5" stroke="#111" stroke-width="1.6"/>
<!-- cards -->
<rect x="1009.5" y="167" width="61.5" height="68" rx="1" fill="#f6f6f8"/><rect x="1073.5" y="167" width="61.5" height="68" rx="1" fill="#f6f6f8"/><rect x="1137.0" y="167" width="61.5" height="68" rx="1" fill="#f6f6f8"/><rect x="1009.5" y="242" width="61.5" height="68" rx="1" fill="#f6f6f8"/><rect x="1073.5" y="242" width="61.5" height="68" rx="1" fill="#f6f6f8"/><rect x="1137.0" y="242" width="61.5" height="68" rx="1" fill="#f6f6f8"/><rect x="1009.5" y="317" width="61.5" height="68" rx="1" fill="#f6f6f8"/><rect x="1073.5" y="317" width="61.5" height="68" rx="1" fill="#f6f6f8"/><rect x="1137.0" y="317" width="61.5" height="68" rx="1" fill="#f6f6f8"/><rect x="1009.5" y="392" width="61.5" height="68" rx="1" fill="#f6f6f8"/><rect x="1073.5" y="392" width="61.5" height="68" rx="1" fill="#f6f6f8"/><rect x="1137.0" y="392" width="61.5" height="68" rx="1" fill="#f6f6f8"/><rect x="1009.5" y="467" width="61.5" height="68" rx="1" fill="#f6f6f8"/><rect x="1073.5" y="467" width="61.5" height="68" rx="1" fill="#f6f6f8"/><rect x="1137.0" y="467" width="61.5" height="68" rx="1" fill="#f6f6f8"/><rect x="1009.5" y="542" width="61.5" height="68" rx="1" fill="#f6f6f8"/><rect x="1073.5" y="542" width="61.5" height="68" rx="1" fill="#f6f6f8"/><rect x="1137.0" y="542" width="61.5" height="68" rx="1" fill="#f6f6f8"/><rect x="1009.5" y="617" width="61.5" height="68" rx="1" fill="#f6f6f8"/><rect x="1073.5" y="617" width="61.5" height="68" rx="1" fill="#f6f6f8"/><rect x="1137.0" y="617" width="61.5" height="68" rx="1" fill="#f6f6f8"/>

<path d="M1058.8 173.0L1060.7 176.8L1064.8 177.4L1061.8 180.3L1062.5 184.4L1058.8 182.5L1055.1 184.4L1055.8 180.3L1052.8 177.4L1056.9 176.8Z" fill="none" stroke="#d2d2d6" stroke-width="0.8" stroke-linejoin="round"/><path d="M1122.8 173.0L1124.7 176.8L1128.8 177.4L1125.8 180.3L1126.5 184.4L1122.8 182.5L1119.1 184.4L1119.8 180.3L1116.8 177.4L1120.9 176.8Z" fill="none" stroke="#d2d2d6" stroke-width="0.8" stroke-linejoin="round"/><path d="M1186.3 173.0L1188.2 176.8L1192.3 177.4L1189.3 180.3L1190.0 184.4L1186.3 182.5L1182.6 184.4L1183.3 180.3L1180.3 177.4L1184.4 176.8Z" fill="none" stroke="#d2d2d6" stroke-width="0.8" stroke-linejoin="round"/><path d="M1058.8 248.0L1060.7 251.8L1064.8 252.4L1061.8 255.3L1062.5 259.4L1058.8 257.4L1055.1 259.4L1055.8 255.3L1052.8 252.4L1056.9 251.8Z" fill="none" stroke="#d2d2d6" stroke-width="0.8" stroke-linejoin="round"/><path d="M1122.8 247.7L1124.7 251.6L1129.1 252.3L1125.9 255.3L1126.7 259.6L1122.8 257.6L1118.9 259.6L1119.7 255.3L1116.5 252.3L1120.9 251.6Z" fill="#f5d033" stroke="#f0c419" stroke-width="0.8" stroke-linejoin="round"/><path d="M1186.3 248.0L1188.2 251.8L1192.3 252.4L1189.3 255.3L1190.0 259.4L1186.3 257.4L1182.6 259.4L1183.3 255.3L1180.3 252.4L1184.4 251.8Z" fill="none" stroke="#d2d2d6" stroke-width="0.8" stroke-linejoin="round"/><path d="M1058.8 323.0L1060.7 326.8L1064.8 327.4L1061.8 330.3L1062.5 334.4L1058.8 332.4L1055.1 334.4L1055.8 330.3L1052.8 327.4L1056.9 326.8Z" fill="none" stroke="#d2d2d6" stroke-width="0.8" stroke-linejoin="round"/><path d="M1122.8 323.0L1124.7 326.8L1128.8 327.4L1125.8 330.3L1126.5 334.4L1122.8 332.4L1119.1 334.4L1119.8 330.3L1116.8 327.4L1120.9 326.8Z" fill="none" stroke="#d2d2d6" stroke-width="0.8" stroke-linejoin="round"/><path d="M1186.3 323.0L1188.2 326.8L1192.3 327.4L1189.3 330.3L1190.0 334.4L1186.3 332.4L1182.6 334.4L1183.3 330.3L1180.3 327.4L1184.4 326.8Z" fill="none" stroke="#d2d2d6" stroke-width="0.8" stroke-linejoin="round"/><path d="M1058.8 398.0L1060.7 401.8L1064.8 402.4L1061.8 405.3L1062.5 409.4L1058.8 407.4L1055.1 409.4L1055.8 405.3L1052.8 402.4L1056.9 401.8Z" fill="none" stroke="#d2d2d6" stroke-width="0.8" stroke-linejoin="round"/><path d="M1122.8 398.0L1124.7 401.8L1128.8 402.4L1125.8 405.3L1126.5 409.4L1122.8 407.4L1119.1 409.4L1119.8 405.3L1116.8 402.4L1120.9 401.8Z" fill="none" stroke="#d2d2d6" stroke-width="0.8" stroke-linejoin="round"/><path d="M1186.3 398.0L1188.2 401.8L1192.3 402.4L1189.3 405.3L1190.0 409.4L1186.3 407.4L1182.6 409.4L1183.3 405.3L1180.3 402.4L1184.4 401.8Z" fill="none" stroke="#d2d2d6" stroke-width="0.8" stroke-linejoin="round"/><path d="M1058.8 472.7L1060.7 476.6L1065.1 477.3L1061.9 480.3L1062.7 484.6L1058.8 482.6L1054.9 484.6L1055.7 480.3L1052.5 477.3L1056.9 476.6Z" fill="#f5d033" stroke="#f0c419" stroke-width="0.8" stroke-linejoin="round"/><path d="M1122.8 473.0L1124.7 476.8L1128.8 477.4L1125.8 480.3L1126.5 484.4L1122.8 482.4L1119.1 484.4L1119.8 480.3L1116.8 477.4L1120.9 476.8Z" fill="none" stroke="#d2d2d6" stroke-width="0.8" stroke-linejoin="round"/><path d="M1186.3 473.0L1188.2 476.8L1192.3 477.4L1189.3 480.3L1190.0 484.4L1186.3 482.4L1182.6 484.4L1183.3 480.3L1180.3 477.4L1184.4 476.8Z" fill="none" stroke="#d2d2d6" stroke-width="0.8" stroke-linejoin="round"/><path d="M1058.8 548.0L1060.7 551.8L1064.8 552.4L1061.8 555.3L1062.5 559.4L1058.8 557.4L1055.1 559.4L1055.8 555.3L1052.8 552.4L1056.9 551.8Z" fill="none" stroke="#d2d2d6" stroke-width="0.8" stroke-linejoin="round"/><path d="M1122.8 548.0L1124.7 551.8L1128.8 552.4L1125.8 555.3L1126.5 559.4L1122.8 557.4L1119.1 559.4L1119.8 555.3L1116.8 552.4L1120.9 551.8Z" fill="none" stroke="#d2d2d6" stroke-width="0.8" stroke-linejoin="round"/><path d="M1186.3 548.0L1188.2 551.8L1192.3 552.4L1189.3 555.3L1190.0 559.4L1186.3 557.4L1182.6 559.4L1183.3 555.3L1180.3 552.4L1184.4 551.8Z" fill="none" stroke="#d2d2d6" stroke-width="0.8" stroke-linejoin="round"/><path d="M1058.8 623.0L1060.7 626.8L1064.8 627.4L1061.8 630.3L1062.5 634.4L1058.8 632.4L1055.1 634.4L1055.8 630.3L1052.8 627.4L1056.9 626.8Z" fill="none" stroke="#d2d2d6" stroke-width="0.8" stroke-linejoin="round"/><path d="M1122.8 623.0L1124.7 626.8L1128.8 627.4L1125.8 630.3L1126.5 634.4L1122.8 632.4L1119.1 634.4L1119.8 630.3L1116.8 627.4L1120.9 626.8Z" fill="none" stroke="#d2d2d6" stroke-width="0.8" stroke-linejoin="round"/><path d="M1186.3 623.0L1188.2 626.8L1192.3 627.4L1189.3 630.3L1190.0 634.4L1186.3 632.4L1182.6 634.4L1183.3 630.3L1180.3 627.4L1184.4 626.8Z" fill="none" stroke="#d2d2d6" stroke-width="0.8" stroke-linejoin="round"/>
<rect x="1195.5" y="168" width="4.5" height="372" rx="2" fill="#c9c9cc"/>
<!-- collapse tab -->
<rect x="991" y="343" width="13" height="36" fill="#f7f7f8"/>
<path d="M996 354L1001.2 363L996 371.7" fill="none" stroke="#111" stroke-width="1.5"/>

<g stroke-linejoin="round">
<!-- shadows -->
<g fill="url(#sh)">
<ellipse cx="1040" cy="215" rx="24" ry="14"/><ellipse cx="1104" cy="215" rx="22" ry="12"/><ellipse cx="1167" cy="212" rx="20" ry="12"/>
<ellipse cx="1040" cy="288" rx="24" ry="14"/><ellipse cx="1104" cy="288" rx="22" ry="12"/><ellipse cx="1167" cy="284" rx="20" ry="12"/>
<ellipse cx="1040" cy="430" rx="24" ry="20"/><ellipse cx="1104" cy="432" rx="24" ry="20"/><ellipse cx="1167" cy="430" rx="24" ry="18"/>
<ellipse cx="1040" cy="505" rx="24" ry="18"/><ellipse cx="1104" cy="508" rx="24" ry="18"/><ellipse cx="1167" cy="508" rx="22" ry="16"/>
<ellipse cx="1040" cy="580" rx="22" ry="15"/><ellipse cx="1104" cy="580" rx="22" ry="15"/><ellipse cx="1167" cy="580" rx="22" ry="15"/>
</g>
<!-- row1 holes -->
<g stroke="#6c7078" stroke-width="0.8" fill="url(#stripe)">
<path d="M1020.5 193.4L1030.5 181.6L1057.7 185.4L1056.4 209.3L1047.5 224.4L1022.3 218.2Z"/>
<path d="M1020.5 193.4L1050.4 196L1057.7 185.4M1050.4 196L1047.5 224.4" fill="none" stroke-width="0.6"/>
<path d="M1088.8 189.4A14.8 6.5 0 0 1 1118.4 189.4V216.5A14.8 6.5 0 0 1 1088.8 216.5Z"/>
<path d="M1088.8 189.4A14.8 6.5 0 0 0 1118.4 189.4" fill="none" stroke-width="0.6"/>
<circle cx="1167.4" cy="201.6" r="15"/>
</g>
<!-- row2 -->
<path d="M1020 265.8L1032.7 253.6L1057.7 257L1057 282.4L1048.2 296.2L1022.3 290.9Z" fill="#c3121c" stroke="#8a0c12" stroke-width="0.6"/>
<path d="M1020 265.8L1032.7 253.6L1057.7 257L1051.5 269.1Z" fill="#d41a24"/>
<path d="M1051.5 269.1L1057.7 257L1057 282.4L1048.2 296.2Z" fill="#a80f18"/>
<path d="M1088.8 260.3V288A14.8 5.5 0 0 0 1118.4 288V260.3Z" fill="#e57b1b" stroke="#9a4c0c" stroke-width="0.6"/>
<ellipse cx="1103.6" cy="260.3" rx="14.8" ry="5.5" fill="#f08c2a" stroke="#9a4c0c" stroke-width="0.6"/>
<circle cx="1167.4" cy="272.9" r="14.4" fill="#1b8fd0"/>

<!-- row3 -->
<path d="M1027.5 362.5C1025 355 1030 343 1040 339C1044 337.5 1047 336 1049 334.5C1052 336 1054 339 1052 343C1055 350 1050 357 1040 359.5Z" fill="#b9c8f2" stroke="#4b5a8a" stroke-width="0.9"/>
<path d="M1029.5 359.5L1039 347" stroke="#4b5a8a" stroke-width="1"/><circle cx="1040" cy="346" r="1.8" fill="#4b5a8a"/>
<line x1="1103.6" y1="325" x2="1103.6" y2="373" stroke="#b58fb0" stroke-width="0.7"/>
<path d="M1101.5 333Q1101 345 1093 350.5Q1086 352.5 1085.9 354.5Q1087 358 1098 358.5L1100 362Q1102 367 1103.6 367Q1105.2 367 1107.2 362L1109.2 358.5Q1120.2 358 1121.3 354.5Q1121.2 352.5 1114.2 350.5Q1106.2 345 1105.7 333Q1103.6 330.5 1101.5 333Z" fill="#c8eab6" stroke="#86b577" stroke-width="0.6"/><path d="M1087 355.5Q1103.6 359 1120 355.5" fill="none" stroke="#9cc98c" stroke-width="0.6"/>
<path d="M1153 342.5L1158.5 340L1165 352L1167 339.5L1173 337L1178.5 339.5L1180 366L1174.5 369.3L1167.5 357L1165.5 367L1159.5 369L1155 366Z" fill="#a3c7ea" stroke="#6f97bf" stroke-width="0.6"/><path d="M1158.5 340L1160 366M1173 337L1174.5 369.3" stroke="#7ea6cc" stroke-width="0.8"/>
<rect x="1078.5" y="374" width="50.5" height="14" rx="7" fill="#19a34a"/>
<text x="1103.7" y="384.6" font-family="Liberation Sans" font-weight="bold" font-size="9" fill="#fff" text-anchor="middle">New!</text>
<!-- row4 -->
<path d="M1039.8 412L1053.5 436.4A13.7 7 0 0 1 1026.1 436.4Z" fill="#7a3a9e" stroke="#3e1a55" stroke-width="0.7"/>
<path d="M1103.6 412.5L1086.5 440.9L1113.6 446.8L1119.8 430.2Z" fill="#f2c91f" stroke="#6b5508" stroke-width="0.8"/>
<path d="M1103.6 412.5L1113.6 446.8" stroke="#6b5508" stroke-width="0.5"/>
<path d="M1149 435.8L1170.1 412.5L1183.4 424.7L1177.8 440.9Z" fill="#3aa63a" stroke="#1d5a1d" stroke-width="0.7"/>
<path d="M1149 435.8L1162 425L1177.8 440.9" fill="#2e8f2e" stroke="#1d5a1d" stroke-width="0.5"/>
<!-- row5 -->
<g fill="#c0141c" stroke="#7a0a10" stroke-width="0.5">
<path d="M1022 491L1030 492.5L1029.5 495L1027.5 494.8L1025.5 505L1022.5 504.5L1024.5 494.5L1021.5 494Z"/>
<path d="M1030.5 493L1038 494.5L1037.5 497L1033.5 496.3L1033.2 498L1036.8 498.6L1036.3 501L1032.8 500.4L1032.4 502.5L1036.5 503.3L1036 506L1028.5 504.5Z"/>
<path d="M1038.5 495L1042 495.6L1044 499L1047.5 496.5L1050.5 497L1045.5 501.5L1048.5 507L1045 506.5L1043 503.5L1039.5 506L1036.5 505.5L1041.5 501.5Z"/>
<path d="M1051 497.5L1060 499L1059.5 501.5L1057 501.2L1055.5 511L1052.5 510.5L1054 500.6L1050.5 500Z"/>
</g>
<path d="M1085.3 509.8L1098 497Q1102 492 1110 492.5Q1120.6 493.5 1120.6 502L1114.8 517L1090 512Z" fill="#63c2d3" stroke="#2c7d8c" stroke-width="0.7"/>
<path d="M1085.3 509.8Q1094 500 1106 503Q1114 506 1114.8 517" fill="#8fd6e2" stroke="#2c7d8c" stroke-width="0.5"/>
<path d="M1153.5 511A13.9 19 0 0 1 1181.3 511A13.9 4 0 0 1 1153.5 511Z" fill="#d7137f"/>
<!-- row6 -->
<ellipse cx="1039.7" cy="575.4" rx="14.4" ry="8.7" fill="#1a8dcc" stroke="#0c5a86" stroke-width="0.5"/>
<ellipse cx="1039.7" cy="574" rx="5" ry="1.8" fill="#f4f8fb"/>
<path d="M1089.4 572.5V579A14.4 7 0 0 0 1118.2 579V572.5Z" fill="#d8721a" stroke="#7a3e08" stroke-width="0.6"/>
<ellipse cx="1103.8" cy="572.5" rx="14.4" ry="6.8" fill="#e88426" stroke="#7a3e08" stroke-width="0.6"/>
<ellipse cx="1103.8" cy="571.5" rx="6" ry="3" fill="#c26410"/>
<ellipse cx="1167.4" cy="577" rx="14.4" ry="7.5" fill="none" stroke="#8a5a30" stroke-width="2.2"/>
<ellipse cx="1167.4" cy="573.5" rx="14.4" ry="7" fill="#e3ecf2" stroke="#5e3a18" stroke-width="1.5"/>
<!-- row7 -->
<path d="M1020 645L1043 650L1052 654H1020Z" fill="#2c4a9a"/>
<path d="M1090 636L1100 630L1116 633L1118 654H1090Z" fill="#2d4b9c" stroke="#17285a" stroke-width="0.6"/>
<path d="M1154 642L1166 635L1180 640L1181 654H1153Z" fill="#d8131f"/>
</g>

</svg>

</body></html>
